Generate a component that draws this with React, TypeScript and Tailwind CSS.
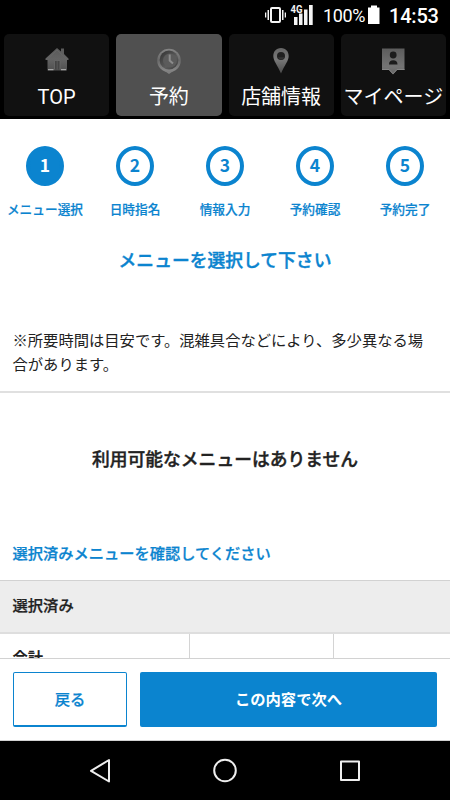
import type { ReactNode } from 'react';

function HomeIcon() {
  return (
    <svg width="24" height="24" viewBox="0 0 24 24">
      <defs>
        <linearGradient id="home" x1="0" y1="0" x2="0" y2="1">
          <stop offset="0" stopColor="#5a5a5a" />
          <stop offset="0.5" stopColor="#646464" />
          <stop offset="1" stopColor="#505050" />
        </linearGradient>
      </defs>
      <path d="M0.5 11.5 12 1l4 3.4V1.5h3v5.6l4.5 4.4v1.6H22V23.5H2.500V13.100H.5Z" fill="url(#home)" />
      <path d="M3 11.500 12 3l9 8.500" stroke="#6a6a6a" strokeWidth="0.7" fill="none" />
      <path d="M9.500 22.500v-9h5.500v9" fill="#444" stroke="#6a6a6a" strokeWidth="0.8" />
      <path d="M12.200 14v8.500" stroke="#626262" strokeWidth="0.8" />
      <path d="M3 22.700h5.500M16 22.700h5" stroke="#a5a5a5" strokeWidth="1.200" />
    </svg>
  );
}

function ClockIcon() {
  return (
    <svg width="26" height="28" viewBox="0 0 26 28">
      <defs>
        <linearGradient id="clock" x1="0" y1="0" x2="0" y2="1">
          <stop offset="0" stopColor="#858585" />
          <stop offset="0.5" stopColor="#6a6a6a" />
          <stop offset="1" stopColor="#8c8c8c" />
        </linearGradient>
        <linearGradient id="face" x1="0" y1="0" x2="1" y2="1">
          <stop offset="0" stopColor="#303030" />
          <stop offset="0.6" stopColor="#5c5c5c" />
          <stop offset="1" stopColor="#3a3a3a" />
        </linearGradient>
      </defs>
      <circle cx="13" cy="13.500" r="11.800" fill="url(#clock)" />
      <path d="M8 23.500 13 27l5-3.500Z" fill="#808080" />
      <circle cx="13" cy="13" r="9.400" fill="url(#face)" />
      <circle cx="14" cy="13.500" r="7" fill="#5b5b5b" />
      <path d="M13.700 7.500v6l3.300 3" stroke="#8c8c8c" strokeWidth="2" fill="none" />
    </svg>
  );
}

function PinIcon() {
  return (
    <svg width="18" height="28" viewBox="0 0 18 28">
      <defs>
        <linearGradient id="pin" x1="0" y1="0" x2="0" y2="1">
          <stop offset="0" stopColor="#666" />
          <stop offset="0.45" stopColor="#787878" />
          <stop offset="1" stopColor="#4a4a4a" />
        </linearGradient>
      </defs>
      <path d="M9 1C4 1 1.300 4.700 1.300 9c0 4.800 4 9 7.700 17.500C12.700 18 16.700 13.800 16.700 9 16.700 4.700 14 1 9 1Z" fill="url(#pin)" />
      <circle cx="9" cy="9" r="4" fill="#202020" />
      <path d="M6 10.200a3.400 3.400 0 0 0 6.500 0" fill="#333" />
    </svg>
  );
}

function ProfileIcon() {
  return (
    <svg width="24" height="28" viewBox="0 0 24 28">
      <defs>
        <linearGradient id="profile" x1="0" y1="0" x2="0" y2="1">
          <stop offset="0" stopColor="#5c5c5c" />
          <stop offset="0.7" stopColor="#747474" />
          <stop offset="1" stopColor="#646464" />
        </linearGradient>
      </defs>
      <path d="M1 1.500h22.500v21.500h-7.500l-4 4.500-4-4.500H1Z" fill="url(#profile)" />
      <circle cx="12.200" cy="8" r="3.400" fill="#1c1c1c" />
      <path d="M8 17.500c0-3 1.600-4.200 4.200-4.200s4.300 1.200 4.300 4.200Z" fill="#1c1c1c" />
      <path d="M1 22.500h7l4 4.300 4-4.300h7.500" stroke="#858585" fill="none" />
    </svg>
  );
}

function StatusBar() {
  return (
    <div className="flex h-[34px] shrink-0 items-start bg-black pl-[264px] pt-[5px] text-white">
      <svg width="50" height="22" viewBox="0 0 50 22" fill="#f4f4f4">
        <rect x="7" y="3" width="9" height="14" rx="1" fill="none" stroke="#f4f4f4" strokeWidth="2" />
        <path d="M3.500 5h1.500v10H3.500ZM1 7.500h1.300v5H1ZM18 5h1.500v10H18ZM20.700 7.500H22v5h-1.300Z" />
        <path d="M30 12h3.500v8H30ZM35 8.500h3.500V20H35ZM40 4.500h3.500V20H40ZM45 0h3.700v20H45Z" />
        <text x="26.500" y="8" fontSize="10.500" fontWeight="700" textLength="12" lengthAdjust="spacingAndGlyphs" fontFamily="Roboto, sans-serif">4G</text>
      </svg>
      <span className="ml-[9px] w-[44px] whitespace-nowrap text-[18px] leading-[22px] tracking-[-0.35px]">100%</span>
      <svg className="ml-[1px]" width="12" height="20" viewBox="0 0 12 20" fill="#fff">
        <path d="M3 .500h6v2h2.500V19H0V2.500h3Z" />
      </svg>
      <span className="ml-[9px] whitespace-nowrap text-[20px] font-medium leading-[22px] tracking-[-0.2px]">14:53</span>
    </div>
  );
}

function Tab({ icon, label, active }: { icon: ReactNode; label: string; active?: boolean }) {
  return (
    <div className={`flex h-[82px] flex-col items-center rounded-[5px] pt-[13px] text-white ${active ? 'bg-[#505050]' : 'bg-[#111111]'}`}>
      <div className="flex h-7 items-start">{icon}</div>
      <span className="mt-[7px] whitespace-nowrap text-[20px] leading-[30px]">{label}</span>
    </div>
  );
}

const steps = ['メニュー選択', '日時指名', '情報入力', '予約確認', '予約完了'];

export default function App() {
  return (
    <div className="flex h-[800px] w-[450px] flex-col overflow-hidden bg-white font-[Roboto,'Noto_Sans_CJK_JP',sans-serif] text-[#222]">
      <StatusBar />
      <nav className="grid h-[85px] shrink-0 grid-cols-4 gap-[7px] bg-black px-1">
        <Tab icon={<HomeIcon />} label="TOP" />
        <Tab icon={<ClockIcon />} label="予約" active />
        <Tab icon={<PinIcon />} label="店舗情報" />
        <Tab icon={<ProfileIcon />} label="マイページ" />
      </nav>
      <main className="flex min-h-0 flex-1 flex-col overflow-hidden">
        <ol className="grid shrink-0 grid-cols-5 pt-[27px] text-[#0b84cf]">
          {steps.map((label, i) => (
            <li key={label} className="flex flex-col items-center">
              <span className={`flex h-10 w-[38px] items-center justify-center rounded-[50%] border-4 border-[#0b84cf] pb-[2px] text-[17.5px] font-bold leading-none font-['Noto_Sans_CJK_JP',sans-serif] ${i === 0 ? 'bg-[#0b84cf] text-white' : ''}`}>
                {i + 1}
              </span>
              <span className="mt-[14px] whitespace-nowrap text-[12.7px] font-medium leading-5 [-webkit-text-stroke:0.2px]">{label}</span>
            </li>
          ))}
        </ol>
        <h1 className="mt-[26px] shrink-0 text-center text-[17.8px] font-medium leading-[30px] text-[#0b84cf] [-webkit-text-stroke:0.4px]">メニューを選択して下さい</h1>
        <p className="mt-[53px] shrink-0 whitespace-nowrap px-[12.500px] text-[15.3px] leading-[24px]">
          ※所要時間は目安です。混雑具合などにより、多少異なる場
          <br />
          合があります。
        </p>
        <hr className="mt-[14px] shrink-0 border-t-2 border-[#e0e0e0]" />
        <h2 className="mt-[52px] shrink-0 text-center text-[17.8px] font-medium leading-[30px] [-webkit-text-stroke:0.4px]">利用可能なメニューはありません</h2>
        <p className="mt-[64px] shrink-0 px-[12.500px] text-[15.25px] font-medium leading-[30px] text-[#0b84cf] [-webkit-text-stroke:0.25px]">選択済みメニューを確認してください</p>
        <h3 className="mt-[11px] h-[54px] shrink-0 border-t border-b-2 border-t-[#d2d2d2] border-b-[#dedede] bg-[#ededed] px-[12.500px] text-[15.3px] font-medium leading-[51px] [-webkit-text-stroke:0.25px]">選択済み</h3>
        <div className="grid h-[60px] shrink-0 grid-cols-[190px_144px_1fr] text-[15.3px] font-bold leading-[24px]">
          <div className="border-r border-[#d4d4d4] pl-[12.500px] pt-[12px]">合計</div>
          <div className="border-r border-[#d4d4d4]" />
          <div />
        </div>
      </main>
      <footer className="flex h-[83px] shrink-0 gap-[13px] border-t border-b border-[#d2d2d2] bg-white px-[13px] pb-[13px] pt-[13px] text-[15.3px]">
        <button className="w-[114px] rounded-[2px] border border-b-2 border-[#0b84cf] pt-[2px] font-medium text-[#0b84cf] [-webkit-text-stroke:0.25px]">戻る</button>
        <button className="flex-1 rounded-[2px] bg-[#0b84cf] pt-[2px] font-bold text-white">この内容で次へ</button>
      </footer>
      <div className="flex h-[59px] shrink-0 items-center justify-between bg-black pl-[88px] pr-[88px]">
        <svg width="24" height="26" viewBox="0 0 24 26" fill="none" stroke="#eee" strokeWidth="2" strokeLinejoin="round">
          <path d="M21 2v21.500L3 12.800Z" />
        </svg>
        <svg width="26" height="26" viewBox="0 0 26 26" fill="none" stroke="#eee" strokeWidth="2">
          <circle cx="13" cy="12.500" r="10.800" />
        </svg>
        <svg width="24" height="26" viewBox="0 0 24 26" fill="none" stroke="#eee" strokeWidth="2" strokeLinejoin="round">
          <path d="M3 3.500h18v18.500H3Z" />
        </svg>
      </div>
    </div>
  );
}
